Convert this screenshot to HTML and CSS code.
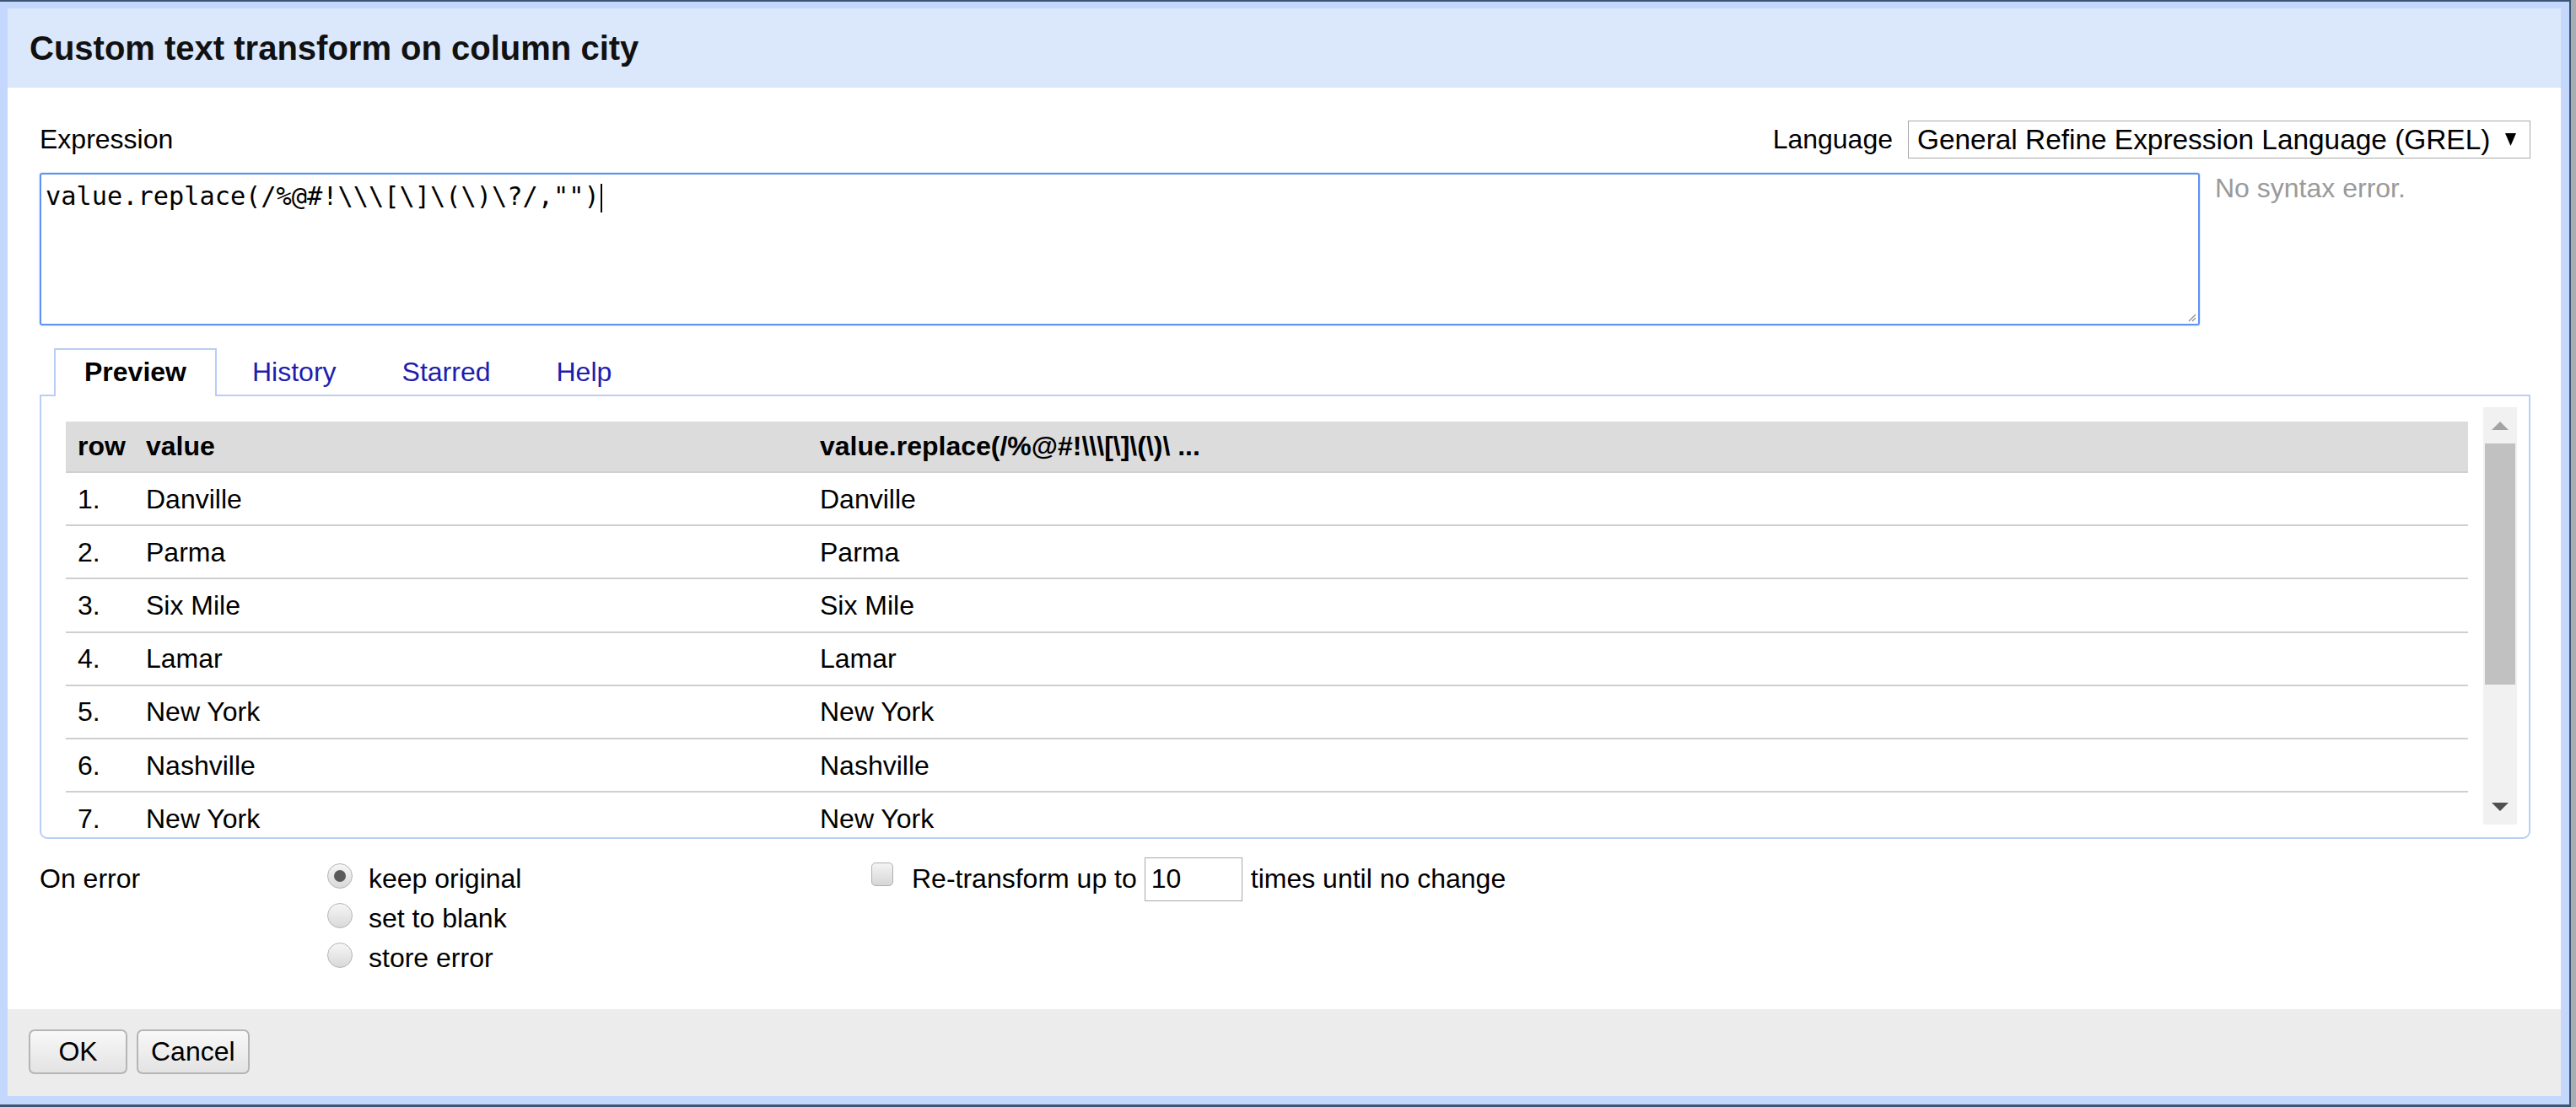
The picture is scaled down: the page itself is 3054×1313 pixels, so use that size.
FILE: index.html
```html
<!DOCTYPE html>
<html>
<head>
<meta charset="utf-8">
<title>Custom text transform</title>
<link rel="stylesheet" href="styles.css">
</head>
<body>
<div class="frame">
  <div class="dialog">
    <div class="dlg-header">Custom text transform on column city</div>
    <div class="dlg-body">
      <div class="expr-row">
        <span class="label">Expression</span>
        <div class="lang">
          <span class="lang-label">Language</span>
          <div class="select">
            <span>General Refine Expression Language (GREL)</span>
            <svg class="select-arrow" width="13" height="15" viewBox="0 0 13 15"><path d="M0 0 H13 L6.5 15 Z" fill="#000"/></svg>
          </div>
        </div>
      </div>
      <div class="editor-row">
        <div class="textarea"><span class="code">value.replace(/%@#!\\\[\]\(\)\?/,"")</span><span class="caret"></span>
          <svg class="grip" width="12" height="12" viewBox="0 0 12 12"><path d="M11 3 L3 11 M11 7 L7 11" stroke="#8a8a8a" stroke-width="1.2"/></svg>
        </div>
        <div class="status">No syntax error.</div>
      </div>
      <div class="tabs">
        <div class="tab active">Preview</div>
        <div class="tab">History</div>
        <div class="tab">Starred</div>
        <div class="tab">Help</div>
      </div>
      <div class="panel">
        <div class="scroll-area">
          <div class="table-wrap">
            <div class="table">
              <div class="tr th"><div class="c1">row</div><div class="c2">value</div><div class="c3">value.replace(/%@#!\\\[\]\(\)\ ...</div></div>
              <div class="tr"><div class="c1">1.</div><div class="c2">Danville</div><div class="c3">Danville</div></div>
              <div class="tr"><div class="c1">2.</div><div class="c2">Parma</div><div class="c3">Parma</div></div>
              <div class="tr"><div class="c1">3.</div><div class="c2">Six Mile</div><div class="c3">Six Mile</div></div>
              <div class="tr"><div class="c1">4.</div><div class="c2">Lamar</div><div class="c3">Lamar</div></div>
              <div class="tr"><div class="c1">5.</div><div class="c2">New York</div><div class="c3">New York</div></div>
              <div class="tr"><div class="c1">6.</div><div class="c2">Nashville</div><div class="c3">Nashville</div></div>
              <div class="tr"><div class="c1">7.</div><div class="c2">New York</div><div class="c3">New York</div></div>
            </div>
          </div>
          <div class="scrollbar">
            <div class="sb-btn"><svg width="20" height="10" viewBox="0 0 20 10"><path d="M0 10 L10 0 L20 10 Z" fill="#a3a3a3"/></svg></div>
            <div class="sb-thumb"></div>
            <div class="sb-space"></div>
            <div class="sb-btn sb-down"><svg width="20" height="10" viewBox="0 0 20 10"><path d="M0 0 L20 0 L10 10 Z" fill="#505050"/></svg></div>
          </div>
        </div>
      </div>
      <div class="options">
        <div class="opt-label">On error</div>
        <div class="radios">
          <div class="line"><span class="radio checked"></span><span>keep original</span></div>
          <div class="line"><span class="radio"></span><span>set to blank</span></div>
          <div class="line"><span class="radio"></span><span>store error</span></div>
        </div>
        <div class="repeat">
          <div class="line"><span class="checkbox"></span><span>Re-transform up to</span><span class="num">10</span><span>times until no change</span></div>
        </div>
      </div>
    </div>
    <div class="dlg-footer">
      <button class="btn">OK</button>
      <button class="btn">Cancel</button>
    </div>
  </div>
</div>
</body>
</html>
```

FILE: styles.css
```css
html, body {
  margin: 0;
  padding: 0;
}
body {
  background: #a9aeb3;
  font-family: "Liberation Sans", Arial, sans-serif;
  font-size: 32px;
  color: #000;
  width: 3054px;
  height: 1313px;
  overflow: hidden;
}
.frame {
  width: 3048px;
  height: 1313px;
  box-sizing: border-box;
  background: #c3d8fc;
  border-top: 2px solid #3e5676;
  border-right: 2px solid #3e5676;
  border-bottom: 3px solid #3e5676;
  padding: 8px 10px 10px 9px;
  display: flex;
}
.dialog {
  flex: 1;
  display: flex;
  flex-direction: column;
  background: #fff;
}
.dlg-header {
  height: 94px;
  flex: none;
  background: #dbe7fb;
  display: flex;
  align-items: center;
  padding-left: 26px;
  font-weight: bold;
  font-size: 40px;
  color: #111;
}
.dlg-body {
  flex: 1;
  padding: 38px 36px 0 38px;
}
.expr-row {
  display: flex;
  justify-content: space-between;
  align-items: center;
  height: 45px;
  padding-top: 1px;
}
.lang {
  display: flex;
  align-items: center;
  gap: 18px;
}
.select {
  width: 738px;
  height: 45px;
  box-sizing: border-box;
  border: 1px solid #a9a9a9;
  display: flex;
  align-items: center;
  justify-content: space-between;
  padding: 0 16px 0 10px;
  font-size: 33.4px;
}
.editor-row {
  display: flex;
  margin-top: 17px;
}
.textarea {
  width: 2561px;
  height: 181px;
  box-sizing: border-box;
  border: 2px solid #5d93f0;
  border-radius: 3px;
  padding: 4px 5px;
  font-family: "DejaVu Sans Mono", "Liberation Mono", monospace;
  font-size: 30.3px;
  line-height: 44px;
  position: relative;
  box-shadow: 0 0 2px #9dbdf6;
  white-space: pre;
}
.caret {
  display: inline-block;
  width: 2px;
  height: 34px;
  background: #000;
  vertical-align: middle;
  margin-left: 1px;
}
.grip {
  position: absolute;
  right: 2px;
  bottom: 2px;
}
.status {
  margin-left: 18px;
  color: #9a9a9a;
  line-height: 36px;
}
.tabs {
  display: flex;
  margin-top: 27px;
  padding-left: 17px;
  margin-bottom: -2px;
  position: relative;
  z-index: 1;
}
.tab {
  height: 57px;
  box-sizing: border-box;
  border: 2px solid transparent;
  border-bottom: none;
  padding: 0 34px 2px;
  margin-right: 6px;
  display: flex;
  align-items: center;
  color: #1d1db0;
}
.tab.active {
  border-color: #b9cdf6;
  background: #fff;
  color: #000;
  font-weight: bold;
}
.panel {
  height: 527px;
  box-sizing: border-box;
  border: 2px solid #b9cdf6;
  border-radius: 0 0 9px 9px;
  padding: 13px 14px 0 13px;
  overflow: hidden;
}
.scroll-area {
  display: flex;
  height: 100%;
}
.table-wrap {
  flex: 1;
  overflow: hidden;
  padding: 17px 18px 0 16px;
}
.tr {
  display: grid;
  grid-template-columns: 81px 799px 1fr;
  height: 63.2px;
  box-sizing: border-box;
  border-bottom: 2px solid #cfcfcf;
  align-items: center;
  padding-top: 1px;
}
.tr > div {
  padding-left: 14px;
  white-space: nowrap;
}
.tr.th {
  height: 61px;
  padding-top: 0;
  background: #dcdcdc;
  font-weight: bold;
  border-bottom: 2px solid #d0d0d0;
}
.scrollbar {
  width: 40px;
  flex: none;
  background: #f1f1f1;
  display: flex;
  flex-direction: column;
  align-items: center;
  margin-bottom: 15px;
}
.sb-btn {
  height: 43px;
  flex: none;
  display: flex;
  align-items: center;
  justify-content: center;
  width: 100%;
}
.sb-thumb {
  width: 36px;
  height: 286px;
  flex: none;
  background: #c1c1c1;
}
.sb-space {
  flex: 1;
}
.options {
  display: flex;
  margin-top: 24px;
}
.opt-label {
  width: 341px;
  line-height: 47px;
}
.radios {
  width: 645px;
}
.line {
  display: flex;
  align-items: center;
  height: 47px;
  white-space: nowrap;
}
.radio {
  width: 28px;
  height: 28px;
  border-radius: 50%;
  border: 1px solid #b4b4b4;
  background: linear-gradient(#f6f6f6, #d9d9d9);
  margin-right: 19px;
  margin-bottom: 8px;
  position: relative;
  flex: none;
}
.radio.checked::after {
  content: "";
  position: absolute;
  left: 7px;
  top: 7px;
  width: 14px;
  height: 14px;
  border-radius: 50%;
  background: #5a5a5a;
}
.checkbox {
  width: 24px;
  height: 26px;
  border-radius: 5px;
  border: 1px solid #b0b0b0;
  background: linear-gradient(#f4f4f4, #d6d6d6);
  margin-right: 22px;
  margin-bottom: 12px;
  flex: none;
}
.num {
  display: inline-flex;
  align-items: center;
  box-sizing: border-box;
  width: 116px;
  height: 52px;
  border: 1px solid #a8a8a8;
  padding-left: 7px;
  margin: 0 10px 0 9px;
}
.dlg-footer {
  height: 103px;
  flex: none;
  background: #ececec;
  display: flex;
  align-items: center;
  padding-left: 25px;
  gap: 11px;
}
.btn {
  font-family: "Liberation Sans", Arial, sans-serif;
  font-size: 32px;
  color: #000;
  height: 53px;
  min-width: 117px;
  box-sizing: border-box;
  padding: 0 15px;
  border: 2px solid #b5b5b5;
  border-radius: 7px;
  background: linear-gradient(#f8f8f8, #e3e3e3);
  margin-bottom: 2px;
}
```
